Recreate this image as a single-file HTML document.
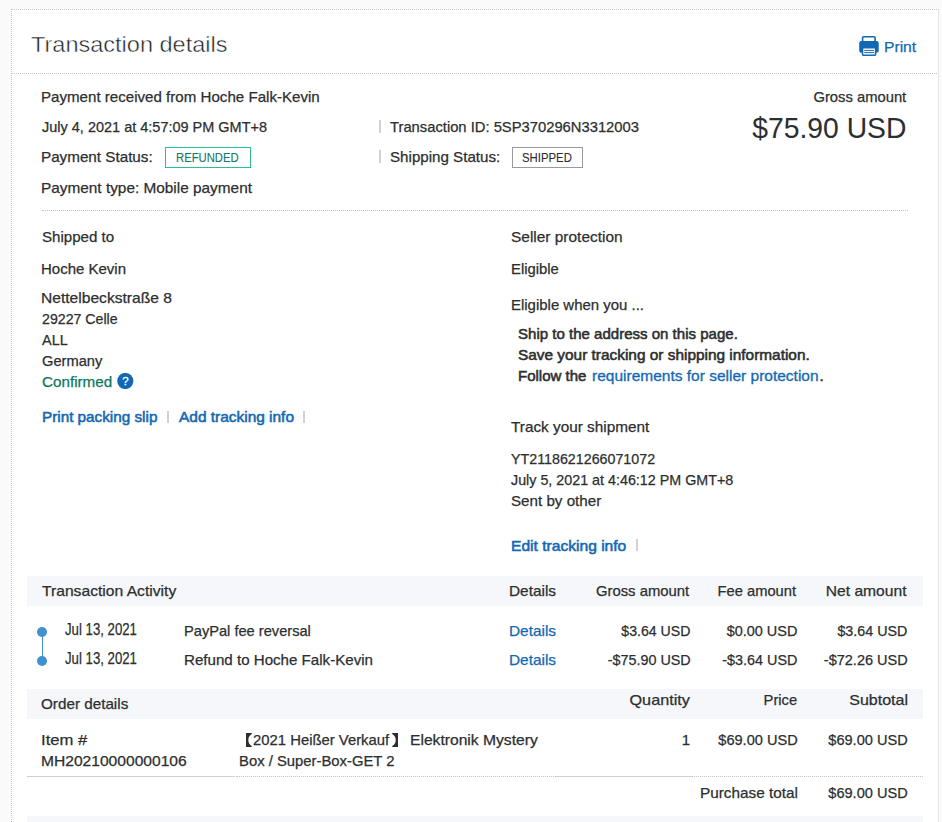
<!DOCTYPE html>
<html><head><meta charset="utf-8"><style>
html,body{margin:0;padding:0;}
body{width:942px;height:822px;overflow:hidden;background:#fafafa;position:relative;font-family:"Liberation Sans",sans-serif;}
.t{position:absolute;white-space:nowrap;line-height:normal;}
.card{position:absolute;left:11px;top:9px;width:926px;height:900px;background:#fff;border-left:1px dotted #c6c6c6;border-top:1px dotted #c6c6c6;border-right:1px solid #e4e4e4;}
.hr{position:absolute;height:0;border-top:1px dotted #c4c4c4;}
.sr{position:absolute;height:1px;background:#cfcfcf;}
.band{position:absolute;left:27px;width:896px;background:#f5f7fa;}
.pipe{position:absolute;width:2px;background:#d3d0d4;}
.badge{position:absolute;box-sizing:border-box;}
</style></head><body>
<div class="card"></div>
<div class="hr" style="left:12px;top:73px;width:925px;"></div>
<div class="hr" style="left:42px;top:210px;width:866px;"></div>
<div class="badge" style="left:165px;top:147px;width:86px;height:21px;border:1px solid #2bbf8a;"></div>
<div class="badge" style="left:512px;top:147px;width:71px;height:21px;border:1px solid #9a9a9a;"></div>
<div class="pipe" style="left:379px;top:120px;height:13px;"></div>
<div class="pipe" style="left:379px;top:150px;height:13px;"></div>
<div class="pipe" style="left:167px;top:411px;height:12px;"></div>
<div class="pipe" style="left:303px;top:411px;height:12px;"></div>
<div class="pipe" style="left:636px;top:539px;height:12px;"></div>
<svg style="position:absolute;left:117px;top:373px" width="17" height="16" viewBox="0 0 17 16"><circle cx="8.3" cy="8" r="8.1" fill="#1268b3"/><text x="8.4" y="12.1" text-anchor="middle" font-family="Liberation Sans" font-weight="400" font-size="11.5" fill="#fff" stroke="#fff" stroke-width="0.3">?</text></svg>
<svg style="position:absolute;left:859px;top:36px" width="20" height="20" viewBox="0 0 20 20">
<rect x="3.6" y="0.8" width="12.5" height="6" rx="1" fill="#fff" stroke="#1268b3" stroke-width="1.6"/>
<rect x="0.2" y="5.1" width="19.5" height="11.6" rx="2" fill="#1268b3"/>
<rect x="3.55" y="11.85" width="13" height="7.3" rx="0.6" fill="#fff" stroke="#1268b3" stroke-width="1.5"/>
<rect x="5.3" y="13.9" width="9.6" height="1" fill="#1268b3"/>
<rect x="5.3" y="16.1" width="9.6" height="1" fill="#1268b3"/>
</svg>
<div class="band" style="top:576px;height:30px;"></div>
<svg style="position:absolute;left:37px;top:627px" width="10" height="40" viewBox="0 0 10 40"><circle cx="5" cy="5" r="5" fill="#4190cf"/><circle cx="5" cy="34" r="5" fill="#4190cf"/><rect x="5" y="5" width="1.1" height="29" fill="#4190cf"/></svg>
<div class="band" style="top:689px;height:30px;"></div>
<div class="sr" style="left:27px;top:776px;width:208px;"></div>
<div class="hr" style="left:236px;top:776px;width:320px;"></div>
<div class="sr" style="left:556px;top:776px;width:136px;"></div>
<div class="hr" style="left:692px;top:776px;width:231px;"></div>
<div class="band" style="top:816px;height:10px;"></div>
<svg style="position:absolute;left:246px;top:733px" width="6" height="14" viewBox="0 0 6 14"><path d="M0 0 H5.8 V0.9 Q2.3 3 2.3 7 Q2.3 11 5.8 13.1 V14 H0 Z" fill="#2c2e2f"/></svg>
<svg style="position:absolute;left:392px;top:733px" width="6" height="14" viewBox="0 0 6 14"><path d="M6 0 H0.2 V0.9 Q3.7 3 3.7 7 Q3.7 11 0.2 13.1 V14 H6 Z" fill="#2c2e2f"/></svg>
<div class="t" id="t0" style="left:30.75px;transform-origin:0 0;top:32px;font-size:22px;color:#1c1e1f;transform:scaleX(1.0689);-webkit-text-stroke:0.45px #fff;">Transaction details</div>
<div class="t" id="t1" style="left:883.96px;transform-origin:0 0;top:38px;font-size:15px;color:#1268b3;-webkit-text-stroke:0.25px #1268b3;transform:scaleX(1.0419);">Print</div>
<div class="t" id="t2" style="left:41.19px;transform-origin:0 0;top:88px;font-size:15px;color:#2c2e2f;-webkit-text-stroke:0.25px #2c2e2f;transform:scaleX(1.0072);">Payment received from Hoche Falk-Kevin</div>
<div class="t" id="t3" style="left:42.00px;transform-origin:0 0;top:118px;font-size:15px;color:#2c2e2f;-webkit-text-stroke:0.25px #2c2e2f;transform:scaleX(0.9657);">July 4, 2021 at 4:57:09 PM GMT+8</div>
<div class="t" id="t4" style="left:40.99px;transform-origin:0 0;top:148px;font-size:15px;color:#2c2e2f;-webkit-text-stroke:0.25px #2c2e2f;transform:scaleX(1.0147);">Payment Status:</div>
<div class="t" id="t5" style="left:176.06px;transform-origin:0 0;top:151px;font-size:12px;color:#12786a;-webkit-text-stroke:0.1px #12786a;transform:scaleX(0.9394);">REFUNDED</div>
<div class="t" id="t6" style="left:40.98px;transform-origin:0 0;top:179px;font-size:15px;color:#2c2e2f;-webkit-text-stroke:0.25px #2c2e2f;transform:scaleX(1.0243);">Payment type: Mobile payment</div>
<div class="t" id="t7" style="left:390.38px;transform-origin:0 0;top:118px;font-size:15px;color:#2c2e2f;-webkit-text-stroke:0.25px #2c2e2f;transform:scaleX(0.9842);">Transaction ID: 5SP370296N3312003</div>
<div class="t" id="t8" style="left:390.00px;transform-origin:0 0;top:148px;font-size:15px;color:#2c2e2f;-webkit-text-stroke:0.25px #2c2e2f;transform:scaleX(1.0092);">Shipping Status:</div>
<div class="t" id="t9" style="left:522.22px;transform-origin:0 0;top:151px;font-size:12px;color:#2c2e2f;-webkit-text-stroke:0.1px #2c2e2f;transform:scaleX(0.9462);">SHIPPED</div>
<div class="t" id="t10" style="right:35.59px;transform-origin:100% 0;top:88px;font-size:15px;color:#2c2e2f;-webkit-text-stroke:0.25px #2c2e2f;transform:scaleX(0.9853);">Gross amount</div>
<div class="t" id="t11" style="right:35.41px;transform-origin:100% 0;top:111px;font-size:30px;color:#2c2e2f;transform:scaleX(0.9436);">$75.90 USD</div>
<div class="t" id="t12" style="left:42.00px;transform-origin:0 0;top:228px;font-size:15px;color:#2c2e2f;-webkit-text-stroke:0.25px #2c2e2f;transform:scaleX(1.0056);">Shipped to</div>
<div class="t" id="t13" style="left:41.00px;transform-origin:0 0;top:260px;font-size:15px;color:#2c2e2f;-webkit-text-stroke:0.25px #2c2e2f;">Hoche Kevin</div>
<div class="t" id="t14" style="left:40.96px;transform-origin:0 0;top:289px;font-size:15px;color:#2c2e2f;-webkit-text-stroke:0.25px #2c2e2f;transform:scaleX(1.0400);">Nettelbeckstra&szlig;e 8</div>
<div class="t" id="t15" style="left:42.00px;transform-origin:0 0;top:310px;font-size:15px;color:#2c2e2f;-webkit-text-stroke:0.25px #2c2e2f;transform:scaleX(0.9450);">29227 Celle</div>
<div class="t" id="t16" style="left:42.00px;transform-origin:0 0;top:331px;font-size:15px;color:#2c2e2f;-webkit-text-stroke:0.25px #2c2e2f;transform:scaleX(0.9630);">ALL</div>
<div class="t" id="t17" style="left:42.00px;transform-origin:0 0;top:352px;font-size:15px;color:#2c2e2f;-webkit-text-stroke:0.25px #2c2e2f;transform:scaleX(0.9774);">Germany</div>
<div class="t" id="t18" style="left:42.00px;transform-origin:0 0;top:373px;font-size:15px;color:#0b7762;-webkit-text-stroke:0.25px #0b7762;transform:scaleX(1.0145);">Confirmed</div>
<div class="t" id="t19" style="left:42.00px;transform-origin:0 0;top:408px;font-size:15px;color:#1268b3;-webkit-text-stroke:0.55px #1268b3;transform:scaleX(1.0175);">Print packing slip</div>
<div class="t" id="t20" style="left:179.03px;transform-origin:0 0;top:408px;font-size:15px;color:#1268b3;-webkit-text-stroke:0.55px #1268b3;transform:scaleX(1.0292);">Add tracking info</div>
<div class="t" id="t21" style="left:510.59px;transform-origin:0 0;top:228px;font-size:15px;color:#2c2e2f;-webkit-text-stroke:0.25px #2c2e2f;transform:scaleX(1.0296);">Seller protection</div>
<div class="t" id="t22" style="left:510.60px;transform-origin:0 0;top:260px;font-size:15px;color:#2c2e2f;-webkit-text-stroke:0.25px #2c2e2f;transform:scaleX(0.9896);">Eligible</div>
<div class="t" id="t23" style="left:510.60px;transform-origin:0 0;top:296px;font-size:15px;color:#2c2e2f;-webkit-text-stroke:0.25px #2c2e2f;transform:scaleX(0.9970);">Eligible when you ...</div>
<div class="t" id="t24" style="left:518.00px;transform-origin:0 0;top:325px;font-size:15px;color:#2c2e2f;-webkit-text-stroke:0.55px #2c2e2f;transform:scaleX(1.0023);">Ship to the address on this page.</div>
<div class="t" id="t25" style="left:518.00px;transform-origin:0 0;top:346px;font-size:15px;color:#2c2e2f;-webkit-text-stroke:0.55px #2c2e2f;transform:scaleX(1.0261);">Save your tracking or shipping information.</div>
<div class="t" id="t26" style="left:518.00px;transform-origin:0 0;top:367px;font-size:15px;color:#2c2e2f;-webkit-text-stroke:0.55px #2c2e2f;">Follow the</div>
<div class="t" id="t27" style="left:591.77px;transform-origin:0 0;top:367px;font-size:15px;color:#1268b3;-webkit-text-stroke:0.3px #1268b3;transform:scaleX(1.0335);">requirements for seller protection</div>
<div class="t" id="t28" style="left:819.60px;transform-origin:0 0;top:367px;font-size:15px;color:#2c2e2f;-webkit-text-stroke:0.55px #2c2e2f;">.</div>
<div class="t" id="t29" style="left:511.00px;transform-origin:0 0;top:418px;font-size:15px;color:#2c2e2f;-webkit-text-stroke:0.25px #2c2e2f;transform:scaleX(1.0221);">Track your shipment</div>
<div class="t" id="t30" style="left:510.61px;transform-origin:0 0;top:450px;font-size:15px;color:#2c2e2f;-webkit-text-stroke:0.25px #2c2e2f;transform:scaleX(0.9510);">YT2118621266071072</div>
<div class="t" id="t31" style="left:511.00px;transform-origin:0 0;top:471px;font-size:15px;color:#2c2e2f;-webkit-text-stroke:0.25px #2c2e2f;transform:scaleX(0.9536);">July 5, 2021 at 4:46:12 PM GMT+8</div>
<div class="t" id="t32" style="left:511.00px;transform-origin:0 0;top:492px;font-size:15px;color:#2c2e2f;-webkit-text-stroke:0.25px #2c2e2f;transform:scaleX(1.0111);">Sent by other</div>
<div class="t" id="t33" style="left:511.00px;transform-origin:0 0;top:537px;font-size:15px;color:#1268b3;-webkit-text-stroke:0.55px #1268b3;transform:scaleX(1.0396);">Edit tracking info</div>
<div class="t" id="t34" style="left:42.40px;transform-origin:0 0;top:582px;font-size:15px;color:#2c2e2f;-webkit-text-stroke:0.25px #2c2e2f;transform:scaleX(1.0434);">Transaction Activity</div>
<div class="t" id="t35" style="left:508.97px;transform-origin:0 0;top:582px;font-size:15px;color:#2c2e2f;-webkit-text-stroke:0.25px #2c2e2f;transform:scaleX(1.0267);">Details</div>
<div class="t" id="t36" style="right:252.99px;transform-origin:100% 0;top:582px;font-size:15px;color:#2c2e2f;-webkit-text-stroke:0.25px #2c2e2f;transform:scaleX(0.9905);">Gross amount</div>
<div class="t" id="t37" style="right:146.36px;transform-origin:100% 0;top:582px;font-size:15px;color:#2c2e2f;-webkit-text-stroke:0.25px #2c2e2f;transform:scaleX(0.9802);">Fee amount</div>
<div class="t" id="t38" style="right:35.42px;transform-origin:100% 0;top:582px;font-size:15px;color:#2c2e2f;-webkit-text-stroke:0.25px #2c2e2f;transform:scaleX(1.0423);">Net amount</div>
<div class="t" id="t39" style="left:65.35px;transform-origin:0 0;top:621px;font-size:16px;color:#2c2e2f;-webkit-text-stroke:0.25px #2c2e2f;transform:scaleX(0.8253);">Jul 13, 2021</div>
<div class="t" id="t40" style="left:184.20px;transform-origin:0 0;top:622px;font-size:15px;color:#2c2e2f;-webkit-text-stroke:0.25px #2c2e2f;transform:scaleX(0.9752);">PayPal fee reversal</div>
<div class="t" id="t41" style="left:508.97px;transform-origin:0 0;top:622px;font-size:15px;color:#1268b3;-webkit-text-stroke:0.25px #1268b3;transform:scaleX(1.0267);">Details</div>
<div class="t" id="t42" style="right:251.58px;transform-origin:100% 0;top:622px;font-size:15px;color:#2c2e2f;-webkit-text-stroke:0.25px #2c2e2f;transform:scaleX(0.9405);">$3.64 USD</div>
<div class="t" id="t43" style="right:145.00px;transform-origin:100% 0;top:622px;font-size:15px;color:#2c2e2f;-webkit-text-stroke:0.25px #2c2e2f;transform:scaleX(0.9635);">$0.00 USD</div>
<div class="t" id="t44" style="right:34.21px;transform-origin:100% 0;top:622px;font-size:15px;color:#2c2e2f;-webkit-text-stroke:0.25px #2c2e2f;transform:scaleX(0.9534);">$3.64 USD</div>
<div class="t" id="t45" style="left:65.35px;transform-origin:0 0;top:650px;font-size:16px;color:#2c2e2f;-webkit-text-stroke:0.25px #2c2e2f;transform:scaleX(0.8253);">Jul 13, 2021</div>
<div class="t" id="t46" style="left:184.19px;transform-origin:0 0;top:651px;font-size:15px;color:#2c2e2f;-webkit-text-stroke:0.25px #2c2e2f;transform:scaleX(1.0075);">Refund to Hoche Falk-Kevin</div>
<div class="t" id="t47" style="left:508.97px;transform-origin:0 0;top:651px;font-size:15px;color:#1268b3;-webkit-text-stroke:0.25px #1268b3;transform:scaleX(1.0267);">Details</div>
<div class="t" id="t48" style="right:251.58px;transform-origin:100% 0;top:651px;font-size:15px;color:#2c2e2f;-webkit-text-stroke:0.25px #2c2e2f;transform:scaleX(0.9563);">-$75.90 USD</div>
<div class="t" id="t49" style="right:145.00px;transform-origin:100% 0;top:651px;font-size:15px;color:#2c2e2f;-webkit-text-stroke:0.25px #2c2e2f;transform:scaleX(0.9577);">-$3.64 USD</div>
<div class="t" id="t50" style="right:34.21px;transform-origin:100% 0;top:651px;font-size:15px;color:#2c2e2f;-webkit-text-stroke:0.25px #2c2e2f;transform:scaleX(0.9674);">-$72.26 USD</div>
<div class="t" id="t51" style="left:41.38px;transform-origin:0 0;top:695px;font-size:15px;color:#2c2e2f;-webkit-text-stroke:0.25px #2c2e2f;transform:scaleX(1.0163);">Order details</div>
<div class="t" id="t52" style="right:252.24px;transform-origin:100% 0;top:691px;font-size:15px;color:#2c2e2f;-webkit-text-stroke:0.25px #2c2e2f;transform:scaleX(1.0804);">Quantity</div>
<div class="t" id="t53" style="right:144.78px;transform-origin:100% 0;top:691px;font-size:15px;color:#2c2e2f;-webkit-text-stroke:0.25px #2c2e2f;transform:scaleX(0.9824);">Price</div>
<div class="t" id="t54" style="right:33.75px;transform-origin:100% 0;top:691px;font-size:15px;color:#2c2e2f;-webkit-text-stroke:0.25px #2c2e2f;transform:scaleX(1.0685);">Subtotal</div>
<div class="t" id="t55" style="left:40.89px;transform-origin:0 0;top:731px;font-size:15px;color:#2c2e2f;-webkit-text-stroke:0.25px #2c2e2f;transform:scaleX(1.1098);">Item #</div>
<div class="t" id="t56" style="left:40.96px;transform-origin:0 0;top:752px;font-size:15px;color:#2c2e2f;-webkit-text-stroke:0.25px #2c2e2f;transform:scaleX(1.0396);">MH20210000000106</div>
<div class="t" id="t57" style="left:253.40px;transform-origin:0 0;top:731px;font-size:15px;color:#2c2e2f;-webkit-text-stroke:0.25px #2c2e2f;transform:scaleX(0.9899);">2021 Hei&szlig;er Verkauf</div>
<div class="t" id="t58" style="left:409.96px;transform-origin:0 0;top:731px;font-size:15px;color:#2c2e2f;-webkit-text-stroke:0.25px #2c2e2f;transform:scaleX(1.0426);">Elektronik Mystery</div>
<div class="t" id="t59" style="left:238.60px;transform-origin:0 0;top:752px;font-size:15px;color:#2c2e2f;-webkit-text-stroke:0.25px #2c2e2f;transform:scaleX(0.9885);">Box / Super-Box-GET 2</div>
<div class="t" id="t60" style="right:252.00px;transform-origin:100% 0;top:731px;font-size:15px;color:#2c2e2f;-webkit-text-stroke:0.25px #2c2e2f;">1</div>
<div class="t" id="t61" style="right:144.78px;transform-origin:100% 0;top:731px;font-size:15px;color:#2c2e2f;-webkit-text-stroke:0.25px #2c2e2f;transform:scaleX(0.9720);">$69.00 USD</div>
<div class="t" id="t62" style="right:34.78px;transform-origin:100% 0;top:731px;font-size:15px;color:#2c2e2f;-webkit-text-stroke:0.25px #2c2e2f;transform:scaleX(0.9720);">$69.00 USD</div>
<div class="t" id="t63" style="right:143.78px;transform-origin:100% 0;top:784px;font-size:15px;color:#2c2e2f;-webkit-text-stroke:0.25px #2c2e2f;transform:scaleX(1.0211);">Purchase total</div>
<div class="t" id="t64" style="right:34.78px;transform-origin:100% 0;top:784px;font-size:15px;color:#2c2e2f;-webkit-text-stroke:0.25px #2c2e2f;transform:scaleX(0.9720);">$69.00 USD</div>
</body></html>
